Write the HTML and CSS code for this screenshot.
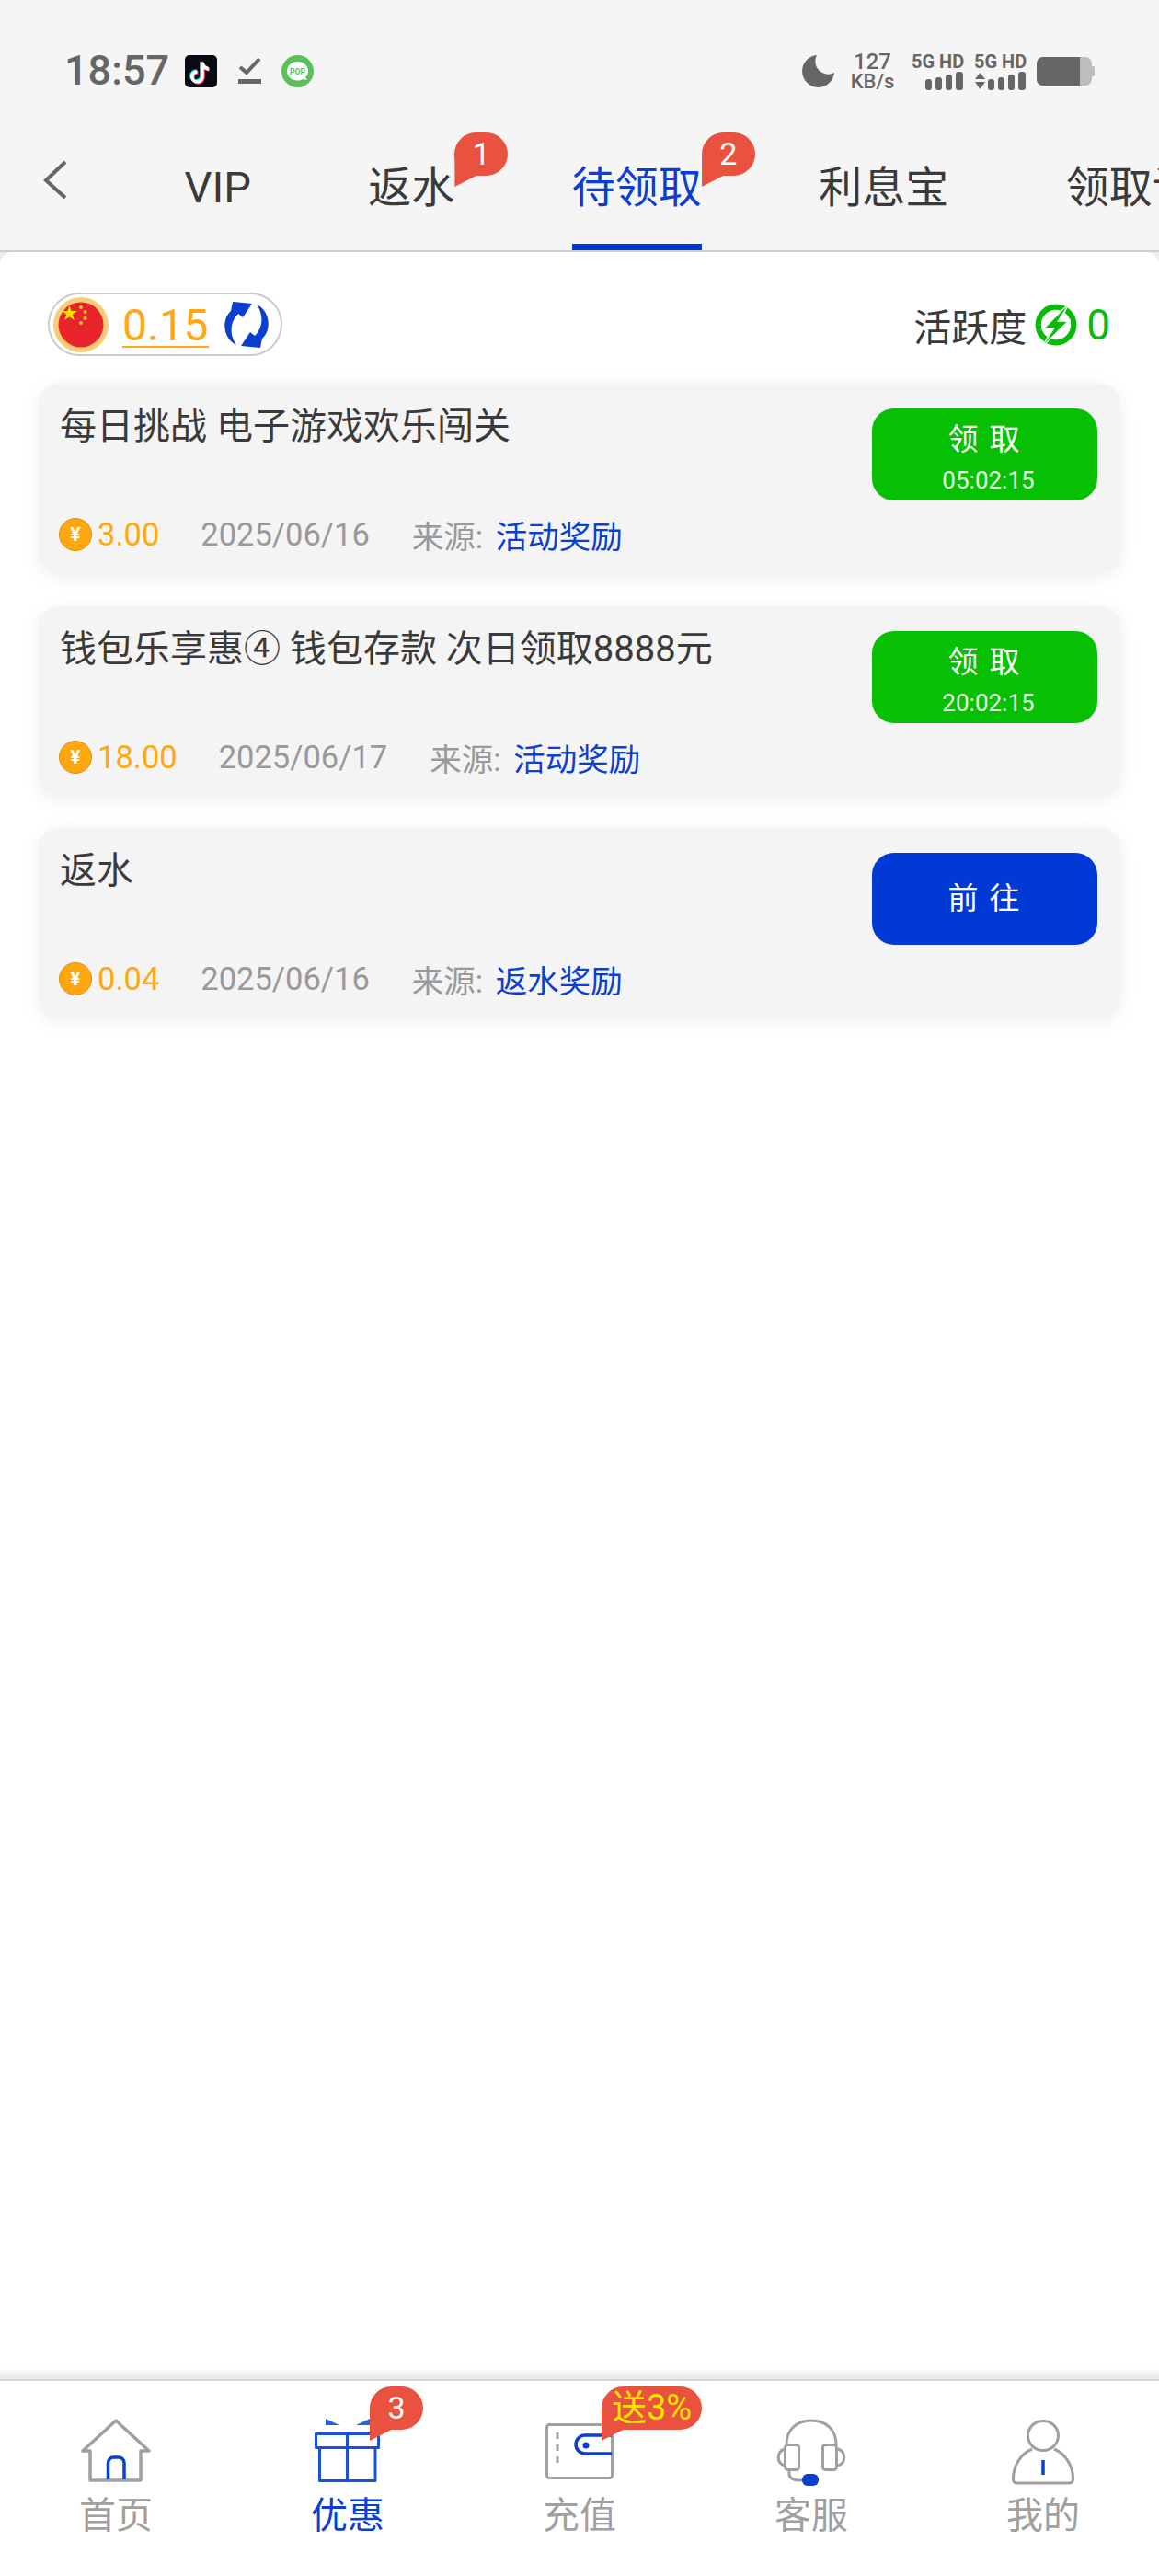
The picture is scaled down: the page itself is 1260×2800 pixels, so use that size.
FILE: index.html
```html
<!DOCTYPE html>
<html lang="zh">
<head>
<meta charset="utf-8">
<title>待领取</title>
<link rel="stylesheet" href="styles.css">
</head>
<body>
<header class="head">
  <div class="status">
    <div class="status-left">
      <span class="time">18:57</span>
      <svg class="ic-tt" viewBox="0 0 35 35"><rect width="35" height="35" rx="5" fill="#0a0a14"/><g fill="none" stroke-width="3.6"><path stroke="#25f4ee" d="M18 7V22.500A5.500 5.500 0 1 1 12.500 17M18 7C18.500 11 21 13.500 25 14"/><path stroke="#fe2c55" d="M20 9V24.500A5.500 5.500 0 1 1 14.500 19M20 9C20.500 13 23 15.500 27 16"/><path stroke="#fff" d="M19 8V23.500A5.500 5.500 0 1 1 13.500 18M19 8C19.500 12 22 14.500 26 15"/></g></svg>
      <svg class="ic-check" viewBox="0 0 26 30"><path d="M2 11L9 17L23 2" fill="none" stroke="#666" stroke-width="4"/><rect x="0" y="24" width="25" height="5" fill="#666"/></svg>
      <svg class="ic-pop" viewBox="0 0 35 35"><circle cx="17.500" cy="17.500" r="17.500" fill="#5ac05c"/><path d="M17.500 7C24 7 29 11.500 29 17C29 20 28 22 26 24L28 27L23 26C21 27 19.500 27.500 17.500 27.500C11 27.500 6 23 6 17.200C6 11.500 11 7 17.500 7Z" fill="#fff"/><text x="17.500" y="20.500" text-anchor="middle" class="pop-text">POP</text></svg>
    </div>
    <div class="status-right">
      <svg class="ic-moon" viewBox="0 0 35 35"><path d="M16 0A17.500 17.500 0 1 0 35 19A14 14 0 0 1 16 0Z" fill="#666"/></svg>
      <div class="speed"><span class="speed-num">127</span><span class="speed-unit">KB/s</span></div>
      <div class="sig">
        <span class="sig-label">5G HD</span>
        <svg class="ic-sig" viewBox="0 0 57 20"><g fill="#666"><rect x="15" y="8" width="7" height="12" rx="3"/><rect x="26" y="6" width="7" height="14" rx="3"/><rect x="37" y="3" width="7" height="17" rx="3"/><rect x="48" y="0" width="8" height="20" rx="3"/></g></svg>
      </div>
      <div class="sig">
        <span class="sig-label">5G HD</span>
        <svg class="ic-sig" viewBox="0 0 57 20"><g fill="#666"><path d="M1 8L6.500 1L12 8ZM1 11H12L6.500 19Z"/><rect x="15" y="8" width="7" height="12" rx="3"/><rect x="26" y="6" width="7" height="14" rx="3"/><rect x="37" y="3" width="7" height="17" rx="3"/><rect x="48" y="0" width="8" height="20" rx="3"/></g></svg>
      </div>
      <svg class="ic-bat" viewBox="0 0 63 31"><rect width="60" height="31" rx="7" fill="#bdbdbd"/><rect x="59" y="10" width="4" height="11" rx="1.500" fill="#bdbdbd"/><path d="M7 0H47V31H7A7 7 0 0 1 0 24V7A7 7 0 0 1 7 0Z" fill="#666"/></svg>
    </div>
  </div>
  <nav class="tabs">
    <svg class="ic-back" viewBox="0 0 28 44"><path d="M25 2L4 22L25 41" fill="none" stroke="#666" stroke-width="4"/></svg>
    <a class="tab">VIP</a>
    <a class="tab">返水<span class="badge">1</span></a>
    <a class="tab active">待领取<span class="badge">2</span></a>
    <a class="tab">利息宝</a>
    <a class="tab">领取记录</a>
  </nav>
</header>

<main class="main">
  <div class="panel">
    <div class="summary">
      <div class="pill">
        <svg class="ic-flag" viewBox="0 0 60 60"><circle cx="30" cy="30" r="30" fill="#f7cd78"/><circle cx="30" cy="30" r="24.500" fill="#e7252b"/><path d="M17.500 9L19.500 15L26 15L20.800 18.800L22.800 25L17.500 21.200L12.200 25L14.200 18.800L9 15L15.500 15Z" fill="#ffe100"/><g fill="#f6c02c"><circle cx="30" cy="11" r="2"/><circle cx="34.500" cy="16" r="2"/><circle cx="34.500" cy="23" r="2"/><circle cx="30" cy="28" r="2"/></g></svg>
        <span class="balance">0.15</span>
        <svg class="ic-refresh" viewBox="-26 -26 52 52"><g fill="#0a3fd0"><path d="M-11 22C-25 16-28-5-17-15L-15-25L6-23L-4-8L-9-12C-18-3-19 11-11 22Z"/><path d="M11-22C25-16 28 5 17 15L15 25L-6 23L4 8L9 12C18 3 19-11 11-22Z"/></g></svg>
      </div>
      <div class="activity">
        <span>活跃度</span>
        <svg class="ic-bolt" viewBox="-23 -23 46 46"><circle r="18.500" fill="none" stroke="#08bb08" stroke-width="6"/><path d="M16-25L-16 5H-5L-16 25L16-5H5Z" fill="#fff"/><path d="M12-20L-11 3H-1L-12 20L11-3H1Z" fill="#08bb08"/></svg>
        <span class="activity-num">0</span>
      </div>
    </div>

    <section class="cards">
      <article class="card">
        <div class="card-body">
          <div class="card-title">每日挑战 电子游戏欢乐闯关</div>
          <div class="meta">
            <span class="coin">¥</span><span class="amount">3.00</span>
            <span class="date">2025/06/16</span>
            <span class="src">来源: <em>活动奖励</em></span>
          </div>
        </div>
        <button class="btn btn-green"><span class="btn-label">领 取</span><span class="btn-time">05:02:15</span></button>
      </article>
      <article class="card">
        <div class="card-body">
          <div class="card-title">钱包乐享惠④ 钱包存款 次日领取8888元</div>
          <div class="meta">
            <span class="coin">¥</span><span class="amount">18.00</span>
            <span class="date">2025/06/17</span>
            <span class="src">来源: <em>活动奖励</em></span>
          </div>
        </div>
        <button class="btn btn-green"><span class="btn-label">领 取</span><span class="btn-time">20:02:15</span></button>
      </article>
      <article class="card">
        <div class="card-body">
          <div class="card-title">返水</div>
          <div class="meta">
            <span class="coin">¥</span><span class="amount">0.04</span>
            <span class="date">2025/06/16</span>
            <span class="src">来源: <em>返水奖励</em></span>
          </div>
        </div>
        <button class="btn btn-blue"><span class="btn-only">前 往</span></button>
      </article>
    </section>
  </div>
</main>

<div class="nav-shade"></div>
<footer class="nav">
  <a class="nav-item">
    <svg class="nav-ic" viewBox="0 0 76 74"><path d="M38 2L2 35H10V67H65V35H74Z" fill="none" stroke="#a0a0a0" stroke-width="3.500" stroke-linejoin="round"/><path d="M29.500 66V48A6 6 0 0 1 35.500 42H41A6 6 0 0 1 47 48V66" fill="none" stroke="#0a3fd0" stroke-width="3.500"/></svg>
    <span>首页</span>
  </a>
  <a class="nav-item on">
    <svg class="nav-ic" viewBox="0 0 72 74"><path d="M12 0L27 7H12ZM45 7L60 0V7Z" fill="#2a5fe0"/><g fill="none" stroke="#1a4fd8" stroke-width="3" stroke-linejoin="round"><rect x="1.500" y="16.500" width="68" height="15"/><path d="M5.500 31.500V67.500H66V31.500M35.500 16.500V67.500"/></g></svg>
    <span>优惠</span>
    <span class="badge nav-badge">3</span>
  </a>
  <a class="nav-item">
    <svg class="nav-ic" viewBox="0 0 74 74"><g transform="translate(0 5)"><rect x="1.500" y="1.500" width="71" height="58" rx="3" fill="none" stroke="#a0a0a0" stroke-width="3"/><path d="M13 10V48" stroke="#a0a0a0" stroke-width="3" stroke-dasharray="7 6" fill="none"/><path d="M72 13H43A10 10 0 0 0 43 33H72" fill="none" stroke="#0a3fd0" stroke-width="3.500"/><ellipse cx="44" cy="24" rx="3.500" ry="3.500" fill="#0a3fd0"/></g></svg>
    <span>充值</span>
    <span class="badge nav-badge promo">送3%</span>
  </a>
  <a class="nav-item">
    <svg class="nav-ic" viewBox="0 0 76 74"><g fill="none" stroke="#a0a0a0" stroke-width="3"><path d="M11 29V28C11 12 22 2 38 2C54 2 65 12 65 28V29"/><rect x="9.500" y="28.500" width="15" height="27" rx="3"/><rect x="50.500" y="28.500" width="15" height="27" rx="3"/><path d="M9 33C0 36 0 48 9 51M67 33C76 36 76 48 67 51"/><path d="M14 56V60C14 64 18 67 24 67H30"/></g><rect x="28" y="60" width="18" height="13" rx="6" fill="#0a3fd0"/></svg>
    <span>客服</span>
  </a>
  <a class="nav-item">
    <svg class="nav-ic" viewBox="0 0 68 74"><g transform="translate(0 1)" fill="none" stroke="#a0a0a0" stroke-width="3"><ellipse cx="34" cy="17.500" rx="16.500" ry="16"/><path d="M22 32C10 37 1.500 50 1.500 64Q1.500 69 5 69H63Q66.500 69 66.500 64C66.500 50 58 37 46 32"/><path d="M34 44V60" stroke="#0a3fd0" stroke-width="3.500"/></g></svg>
    <span>我的</span>
  </a>
</footer>
</body>
</html>
```
FILE: styles.css
```css
* { box-sizing: border-box; }
html, body { margin: 0; padding: 0; }
body {
  width: 1260px;
  height: 2800px;
  display: flex;
  flex-direction: column;
  overflow: hidden;
  background: #fff;
  color: #333;
  font-family: Roboto, "Noto Sans CJK SC", sans-serif;
}
svg { display: block; flex: none; }

/* header */
.head { background: #f5f5f5; border-bottom: 2px solid #cfcfcf; flex: none; }
.status { height: 130px; padding: 40px 70px 16px 70px; display: flex; justify-content: space-between; align-items: center; }
.status-left, .status-right { display: flex; align-items: center; }
.time { font-size: 45px; font-weight: 500; color: #666; line-height: 74px; width: 131px; }
.ic-tt { width: 35px; height: 35px; margin-right: 23px; }
.ic-check { width: 26px; height: 30px; margin-right: 21px; }
.ic-pop { width: 35px; height: 35px; }
.pop-text { font: 700 8.500px Roboto, sans-serif; fill: #5ac05c; }
.ic-moon { width: 35px; height: 35px; margin-right: 17px; }
.speed { width: 49px; margin-right: 18px; display: flex; flex-direction: column; align-items: center; color: #666; }
.speed-num { font-size: 24px; font-weight: 500; line-height: 23px; }
.speed-unit { font-size: 22px; font-weight: 500; line-height: 19px; }
.sig { width: 57px; margin-right: 11px; display: flex; flex-direction: column; color: #666; }
.sig-label { font-size: 20px; font-weight: 700; line-height: 20px; white-space: nowrap; }
.ic-sig { width: 57px; height: 20px; margin-top: 1px; }
.ic-bat { width: 63px; height: 31px; }

.tabs { height: 142px; padding-left: 46px; display: flex; align-items: stretch; gap: 127.500px; overflow: hidden; }
.ic-back { width: 28px; height: 44px; margin: 44px 0 0; align-self: flex-start; margin-right: -1px; }
.tab { position: relative; flex: none; font-size: 47px; line-height: 148px; color: #3a3a3a; white-space: nowrap; }
.tab.active { color: #0a3fd0; }
.tab.active::after { content: ""; position: absolute; left: 0; right: 0; bottom: 0; height: 7px; background: #0039d4; }

.badge {
  position: absolute;
  left: 100%;
  top: 14px;
  width: 58px;
  height: 47px;
  border-radius: 24px;
  background: #e9523e;
  color: #fff;
  font-size: 34px;
  font-weight: 400;
  line-height: 47px;
  text-align: center;
}
.badge::after {
  content: "";
  position: absolute;
  left: 0;
  bottom: -12px;
  width: 24px;
  height: 36px;
  background: #e9523e;
  clip-path: polygon(0 0, 100% 66%, 0 100%);
}

/* content */
.main { flex: 1; background: #ececec; min-height: 0; }
.panel { height: 100%; background: #fff; border-radius: 14px 14px 0 0; padding: 44px 42px 0; }
.summary { display: flex; justify-content: space-between; align-items: center; padding: 0 11px 0 10px; }
.pill { width: 255px; height: 69px; border: 2px solid #cccccc; border-radius: 35px; display: flex; align-items: center; padding-left: 4px; }
.ic-flag { width: 60px; height: 60px; }
.balance { margin-left: 15px; font-size: 48px; line-height: 52px; color: #ffa814; border-bottom: 2px solid #ffa814; height: 50px; }
.ic-refresh { width: 52px; height: 52px; margin-left: 15px; }
.activity { display: flex; align-items: center; font-size: 41px; color: #3a3a3a; }
.ic-bolt { width: 48px; height: 48px; margin: 0 9px 0 8px; }
.activity-num { font-size: 46px; color: #08bb08; line-height: 50px; }

.cards { display: flex; flex-direction: column; gap: 35.500px; margin-top: 30px; }
.card {
  height: 206px;
  background: #f4f4f4;
  border-radius: 22px;
  box-shadow: 0 4px 20px rgba(0, 0, 0, 0.07);
  display: flex;
  justify-content: space-between;
  padding: 25px 25px 0 23px;
}
.card-body { flex: 1; min-width: 0; }
.card-title { font-size: 40px; line-height: 43px; color: #3a3a3a; white-space: nowrap; }
.meta { margin-top: 74px; height: 44px; display: flex; align-items: center; font-size: 34.500px; white-space: nowrap; color: #999; }
.coin {
  flex: none;
  width: 36px;
  height: 36px;
  margin-left: -1px;
  border-radius: 50%;
  background: #ffa711;
  border: 1px solid #d9920f;
  color: #fff;
  font-size: 21px;
  font-weight: 700;
  line-height: 34px;
  text-align: center;
}
.amount { margin-left: 6px; color: #ffa814; }
.date { margin-left: 45px; }
.src { margin-left: 46px; }
.src em { font-style: normal; color: #0a3fd0; margin-left: 5px; }

.btn {
  flex: none;
  width: 245px;
  height: 100px;
  margin-top: 2px;
  border: 0;
  border-radius: 24px;
  color: #fff;
  font-family: inherit;
  padding: 12px 0 0;
  display: flex;
  flex-direction: column;
  align-items: center;
}
.btn-green { background: #07c003; }
.btn-blue { background: #0039d4; justify-content: center; padding: 0; }
.btn-label { font-size: 33px; line-height: 44px; letter-spacing: 2px; }
.btn-only { font-size: 33px; line-height: 44px; letter-spacing: 2px; }
.btn-time { font-size: 26px; line-height: 44px; color: #e6fbe4; padding-left: 8px; }

/* bottom nav */
.nav-shade { flex: none; height: 12px; background: linear-gradient(#fff, #e6e6e6); }
.nav { flex: none; height: 214px; background: #fff; border-top: 2px solid #d4d4d4; display: flex; }
.nav-item { position: relative; width: 252px; display: flex; flex-direction: column; align-items: center; padding-top: 41px; font-size: 40px; line-height: 54px; color: #a0a0a0; }
.nav-item.on { color: #0a3fd0; }
.nav-ic { height: 74px; margin-bottom: 5px; }
.nav-badge { left: 150px; top: 6px; }
.nav-badge.promo { width: 109px; color: #ffe600; font-size: 38px; white-space: nowrap; }
```
